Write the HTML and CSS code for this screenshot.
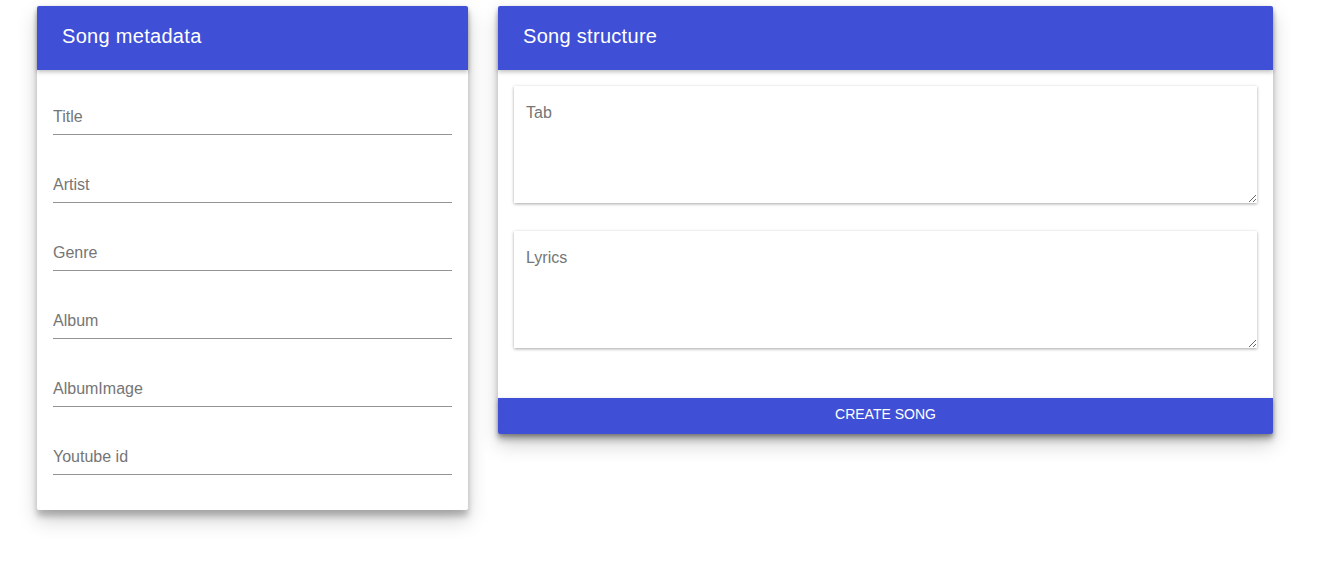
FILE: index.html
```html
<!DOCTYPE html>
<html>
<head>
<meta charset="utf-8">
<link rel="stylesheet" href="styles.css">
</head>
<body>
<div class="page">
  <section class="card card-meta">
    <header class="card-head">Song metadata</header>
    <div class="meta-body">
      <input class="field" type="text" placeholder="Title">
      <input class="field" type="text" placeholder="Artist">
      <input class="field" type="text" placeholder="Genre">
      <input class="field" type="text" placeholder="Album">
      <input class="field" type="text" placeholder="AlbumImage">
      <input class="field" type="text" placeholder="Youtube id">
    </div>
  </section>
  <section class="card card-structure">
    <header class="card-head">Song structure</header>
    <div class="structure-body">
      <textarea class="area" placeholder="Tab"></textarea>
      <textarea class="area" placeholder="Lyrics"></textarea>
    </div>
    <button class="create-btn" type="button">CREATE SONG</button>
  </section>
</div>
</body>
</html>
```

FILE: styles.css
```css
* { box-sizing: border-box; }
html, body { margin: 0; padding: 0; background: #fff; }
body { font-family: "Liberation Sans", Arial, sans-serif; }

.page {
  display: flex;
  align-items: flex-start;
  gap: 30px;
  padding: 6px 0 0 37px;
  min-height: 585px;
}

.card {
  background: #fff;
  border-radius: 2px;
  box-shadow: 0 10px 20px rgba(0,0,0,0.19), 0 6px 6px rgba(0,0,0,0.23);
  display: flex;
  flex-direction: column;
}
.card-meta { width: 431px; }
.card-structure { width: 775px; }

.card-head {
  height: 64px;
  background: #3f4fd6;
  color: #fff;
  font-size: 20px;
  letter-spacing: 0.3px;
  display: flex;
  align-items: center;
  padding: 0 0 3px 25px;
  border-radius: 2px 2px 0 0;
  box-shadow: 0 2px 4px rgba(0,0,0,0.25);
  position: relative;
  z-index: 1;
}

.meta-body {
  display: flex;
  flex-direction: column;
  gap: 38px;
  padding: 35px 16px;
}

.field {
  height: 30px;
  width: 100%;
  border: none;
  border-bottom: 1px solid #949494;
  padding: 0 0 6px 0;
  font-family: inherit;
  font-size: 16px;
  color: #333;
  outline: none;
  background: transparent;
}
.field::placeholder { color: #757575; }

.structure-body {
  display: flex;
  flex-direction: column;
  gap: 28px;
  padding: 16px 16px 50px;
}

.area {
  height: 117px;
  width: 100%;
  border: none;
  box-shadow: 0 1px 3px rgba(0,0,0,0.35);
  padding: 18px 12px;
  font-family: inherit;
  font-size: 16px;
  color: #333;
  outline: none;
  resize: vertical;
}
.area::placeholder { color: #757575; }

.create-btn {
  height: 36px;
  width: 100%;
  border: none;
  background: #3f4fd6;
  color: #fff;
  font-family: inherit;
  font-size: 14px;
  border-radius: 0 0 2px 2px;
  box-shadow: 0 2px 4px rgba(0,0,0,0.3);
  padding: 0 0 4px 0;
  cursor: pointer;
}
```
